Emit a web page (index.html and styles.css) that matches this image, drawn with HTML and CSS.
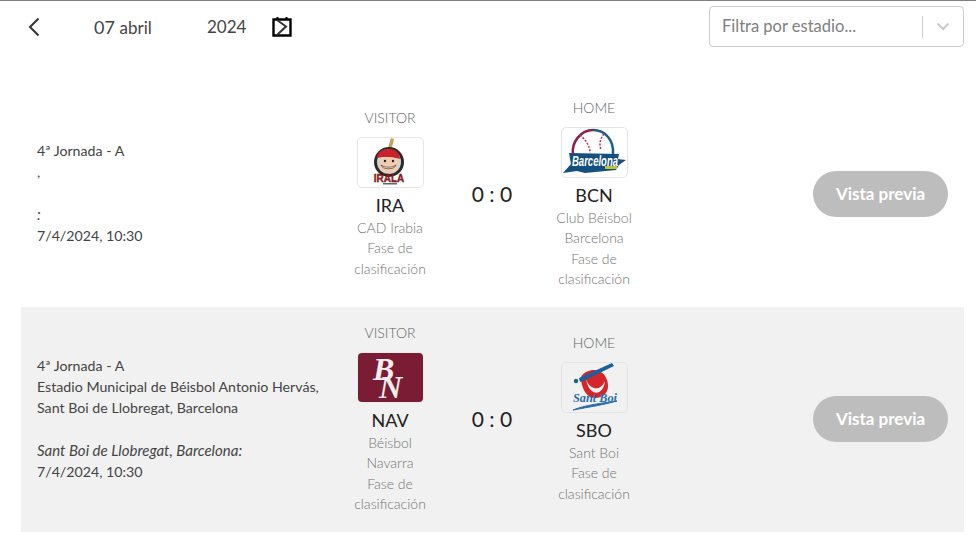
FILE: index.html
```html
<!DOCTYPE html>
<html lang="es">
<head>
<meta charset="utf-8">
<title>Partidos</title>
<link rel="stylesheet" href="styles.css">
</head>
<body>
<header class="toolbar">
  <div class="date-nav">
    <svg class="back" width="12" height="20" viewBox="0 0 12 20"><path d="M10.500 1.500 2 10l8.500 8.500" fill="none" stroke="#333" stroke-width="2"/></svg>
    <span class="day">07 <span class="month">abril</span></span>
    <span class="year">2024</span>
    <svg class="cal" width="20" height="20" viewBox="0 0 20 20"><path d="M1.500 2.500h17v16h-17z" fill="none" stroke="#000" stroke-width="2.400"/><path d="M5.500 0v3M14.500 0v3" stroke="#000" stroke-width="2"/><path d="M5 3l9 6.500L5 18" fill="none" stroke="#333" stroke-width="2"/></svg>
  </div>
  <div class="select">
    <span class="placeholder">Filtra por estadio...</span>
    <span class="sep"></span>
    <svg class="chev" width="14" height="9" viewBox="0 0 14 9"><path d="M1.500 1.500 7 7l5.500-5.500" fill="none" stroke="#ccc" stroke-width="2.200"/></svg>
  </div>
</header>
<main class="list">
  <section class="match">
    <div class="info">
      <div>4ª Jornada - A</div>
      <div>,</div>
      <div class="when"><em>:</em></div>
      <div>7/4/2024, 10:30</div>
    </div>
    <div class="team">
      <div class="role">VISITOR</div>
      <div class="logo">
        <svg width="44" height="48" viewBox="0 0 44 48">
          <path d="M23 0l3 1-3 12h-4z" fill="#c9a15a"/>
          <circle cx="21" cy="24" r="15" fill="#2b2b2b"/>
          <circle cx="21" cy="24" r="12" fill="#cfd6cf"/>
          <path d="M9 20c0-7 8-10 14-9 5 1 9 4 9 10-7-2-16-3-23-1z" fill="#c8232c"/>
          <path d="M11 20c7-1 14-1 20 1l-2 11c-4 4-13 4-17 0z" fill="#f0cdb0"/>
          <path d="M13 27c4 3 11 3 15 0-1 5-14 5-15 0z" fill="#fff" stroke="#5a2a1a" stroke-width=".7"/>
          <circle cx="17" cy="23" r="1.200" fill="#222"/><circle cx="25" cy="23" r="1.200" fill="#222"/>
          <text x="21" y="44" class="ira">IRALA</text>
          <rect x="15" y="45" width="14" height="1.500" fill="#666"/>
        </svg>
      </div>
      <div class="abbr">IRA</div>
      <div class="sub">CAD Irabia</div>
      <div class="sub">Fase de clasificación</div>
    </div>
    <div class="score">0 : 0</div>
    <div class="team">
      <div class="role">HOME</div>
      <div class="logo">
        <svg width="65" height="48" viewBox="0 0 65 48">
          <circle cx="31" cy="22" r="20" fill="#fff"/>
          <path d="M11 27C9 14 19 2 31 2" fill="none" stroke="#8e1f4a" stroke-width="2.500"/>
          <path d="M31 2C43 2 52 12 51 26" fill="none" stroke="#1d5c8f" stroke-width="2.500"/>
          <path d="M18 7c6 5 10 11 10 18M42 6c-4 5-5 10-3 16" fill="none" stroke="#b9314f" stroke-width="1.500" stroke-dasharray="2 1.500"/>
          <path d="M1 45 9 36 7 25l50 1-1 5 8 1-7 5-3 5-31 3-8-2z" fill="#14507f"/>
          <text x="10" y="38" textLength="46" lengthAdjust="spacingAndGlyphs" class="bcn">Barcelona</text>
          <rect x="43" y="38" width="12" height="3" fill="#c6c23a"/>
        </svg>
      </div>
      <div class="abbr">BCN</div>
      <div class="sub">Club Béisbol Barcelona</div>
      <div class="sub">Fase de clasificación</div>
    </div>
    <div class="action"><button class="preview" type="button">Vista previa</button></div>
  </section>
  <section class="match alt">
    <div class="info">
      <div>4ª Jornada - A</div>
      <div>Estadio Municipal de Béisbol Antonio Hervás, Sant Boi de Llobregat, Barcelona</div>
      <div class="when"><em>Sant Boi de Llobregat, Barcelona:</em></div>
      <div>7/4/2024, 10:30</div>
    </div>
    <div class="team">
      <div class="role">VISITOR</div>
      <div class="logo logo-nav">
        <svg width="65" height="49" viewBox="0 0 65 49"><rect width="65" height="49" rx="4" fill="#7a1c33"/><text class="nav" x="15" y="27">B<tspan x="21" y="45">N</tspan></text></svg>
      </div>
      <div class="abbr">NAV</div>
      <div class="sub">Béisbol Navarra</div>
      <div class="sub">Fase de clasificación</div>
    </div>
    <div class="score">0 : 0</div>
    <div class="team">
      <div class="role">HOME</div>
      <div class="logo">
        <svg width="65" height="48" viewBox="0 0 65 48">
          <path d="M19 14c3-5 8-7 13-7 9 0 14 8 14 16 0 7-5 12-13 12-9 0-14-11-14-21z" fill="#d4252a"/>
          <path d="M24 15c2 11 14 15 19 3-2 17-17 15-19-3z" fill="#f1f1f1"/>
          <path d="M17 15 50 0l2 3-31 15-3 1z" fill="#1a5f9e"/>
          <circle cx="14" cy="18" r="2.200" fill="#1a5f9e"/>
          <path d="M11 47c12-5 30-7 44-9-14 4-28 6-44 9z" fill="#2a6ea8" stroke="#2a6ea8"/>
          <text x="11" y="39" textLength="44" lengthAdjust="spacingAndGlyphs" class="sant">Sant Boi</text>
        </svg>
      </div>
      <div class="abbr">SBO</div>
      <div class="sub">Sant Boi</div>
      <div class="sub">Fase de clasificación</div>
    </div>
    <div class="action"><button class="preview" type="button">Vista previa</button></div>
  </section>
</main>
</body>
</html>
```
FILE: styles.css
```css
* { box-sizing: border-box; }
html, body { margin: 0; padding: 0; }
body {
  width: 976px;
  height: 557px;
  overflow: hidden;
  background: #fff;
  border-top: 1px solid #7f7f7f;
  font-family: "Lato", "Liberation Sans", sans-serif;
  color: #333;
}
.toolbar {
  display: flex;
  justify-content: space-between;
  height: 80px;
  padding: 5px 12px 0 28px;
}
.date-nav {
  display: flex;
  align-items: center;
  height: 41px;
  font-size: 18px;
  font-weight: 400;
  color: #444;
}
.back { margin-right: 54px; }
.day { width: 113px; }
.month { font-size: 17px; }
.year { width: 38px; font-size: 17px; }
.cal { margin-left: 27px; }
.select {
  display: flex;
  align-items: center;
  width: 255px;
  height: 41px;
  padding: 0 12px;
  background: #fff;
  border: 1px solid #ccc;
  border-radius: 4px;
}
.placeholder {
  flex: 1;
  padding-bottom: 2px;
  font-size: 16.500px;
  font-weight: 400;
  color: #808080;
}
.sep { width: 1px; height: 22px; background: #ccc; margin-right: 13px; }
.chev { margin-right: 1px; }
.list { margin: 0 12px 0 21px; }
.match {
  display: flex;
  align-items: center;
  height: 225px;
  padding-left: 16px;
  margin-bottom: 1px;
}
.alt { background: #f1f1f1; padding-bottom: 2px; }
.info {
  width: 300px;
  padding-bottom: 1px;
  font-size: 14.200px;
  font-weight: 400;
  line-height: 21px;
  color: #444;
}
.info em { font-size: 15px; }
.when { margin-top: 22px; }
.team {
  width: 106px;
  padding: 0 12px;
  text-align: center;
  font-weight: 300;
}
.role { font-size: 14px; color: #666; line-height: 20px; margin-bottom: 9px; }
.logo {
  display: flex;
  align-items: center;
  justify-content: center;
  width: 67px;
  height: 51px;
  margin: 0 auto;
  border: 1px solid #e4e4e4;
  border-radius: 5px;
}
.logo-nav { border-color: #ececec; }
.nav { font-family: "Liberation Serif", serif; font-style: italic; font-weight: 700; font-size: 32px; fill: #f6eeee; }
.sant { font-family: "Liberation Serif", serif; font-style: italic; font-weight: 700; font-size: 13px; fill: #2a6ea8; }
.bcn { font-family: "Liberation Sans", sans-serif; font-style: italic; font-weight: 700; font-size: 15px; fill: #fff; }
.ira { font-family: "Liberation Sans", sans-serif; font-weight: 700; font-size: 10px; fill: #b3161c; stroke: #3a0a0a; stroke-width: .3px; text-anchor: middle; }
.abbr { font-size: 18px; font-weight: 400; color: #222; line-height: 22px; margin-top: 6px; margin-bottom: 2px; }
.sub { font-size: 14px; line-height: 20.500px; color: #737373; }
.score {
  width: 98px;
  text-align: center;
  font-size: 21px;
  font-weight: 400;
  color: #222;
}
.action { flex: 1; display: flex; justify-content: flex-end; padding-right: 16px; }
.preview {
  width: 135px;
  height: 46px;
  border: 0;
  border-radius: 23px;
  background: #bdbdbd;
  color: #fff;
  font-family: inherit;
  font-size: 17px;
  font-weight: 700;
}
```
